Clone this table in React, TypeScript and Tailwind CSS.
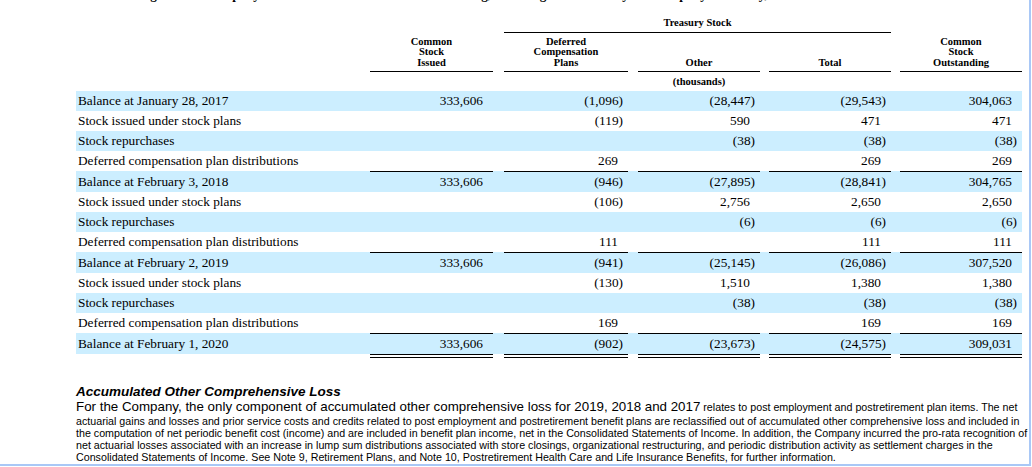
const cols = "grid grid-cols-[294px_123px_11px_124px_10px_122px_9px_122px_9px_122px]";

type Row = {
    label: string
    values: (string | null)[]
    ruled?: boolean
}

const rows: Row[] = [
    { label: "Balance at January 28, 2017", values: ["333,606", "(1,096)", "(28,447)", "(29,543)", "304,063"] },
    { label: "Stock issued under stock plans", values: [null, "(119)", "590", "471", "471"] },
    { label: "Stock repurchases", values: [null, null, "(38)", "(38)", "(38)"] },
    { label: "Deferred compensation plan distributions", values: [null, "269", null, "269", "269"] },
    { label: "Balance at February 3, 2018", values: ["333,606", "(946)", "(27,895)", "(28,841)", "304,765"], ruled: true },
    { label: "Stock issued under stock plans", values: [null, "(106)", "2,756", "2,650", "2,650"] },
    { label: "Stock repurchases", values: [null, null, "(6)", "(6)", "(6)"] },
    { label: "Deferred compensation plan distributions", values: [null, "111", null, "111", "111"] },
    { label: "Balance at February 2, 2019", values: ["333,606", "(941)", "(25,145)", "(26,086)", "307,520"], ruled: true },
    { label: "Stock issued under stock plans", values: [null, "(130)", "1,510", "1,380", "1,380"] },
    { label: "Stock repurchases", values: [null, null, "(38)", "(38)", "(38)"] },
    { label: "Deferred compensation plan distributions", values: [null, "169", null, "169", "169"] },
    { label: "Balance at February 1, 2020", values: ["333,606", "(902)", "(23,673)", "(24,575)", "309,031"], ruled: true },
];

function Amount({ value }: { value: string | null }) {
    if (!value) return null;
    // closing paren hangs past the column like in the filing
    if (value.endsWith(")")) return <span className="mr-[-5px]">{value}</span>;
    return <span>{value}</span>;
}

function TableRow({ row, index }: { row: Row; index: number }) {
    const cell = row.ruled ? "border-t border-black" : "";
    return (
        <div className={`${cols} ${index % 2 === 0 ? "bg-[#cceeff]" : "bg-white"} leading-[20px] text-[13.3px]`}>
            <div className={`pl-[2px] whitespace-nowrap ${row.ruled ? "pt-px" : ""}`}>{row.label}</div>
            {row.values.map((v, i) => (
                <>
                    {i > 0 && <div key={`g${i}`} />}
                    <div key={i} className={`text-right pr-[10px] ${cell}`}>
                        <Amount value={v} />
                    </div>
                </>
            ))}
        </div>
    );
}

export default function App() {
    return (
        <div className="w-[1032px] h-[467px] bg-white overflow-hidden">
            <div className="w-[1031px] h-[466px] border-r-2 border-b-2 border-[#a9c8f6] text-black">
                {/* clipped caption line from the previous page section */}
                <div className="h-[3px] overflow-hidden pl-[120px]">
                    <p className="mt-[-13px] leading-[16px] text-[13px] font-bold whitespace-nowrap" style={{ fontFamily: '"Liberation Serif", serif' }}>
                        Changes in the Company's Common Stock issued and outstanding, including shares held by the Company's treasury, are as follows:
                    </p>
                </div>

                <div className="pl-[76px] w-[1022px]" style={{ fontFamily: '"Liberation Serif", "Times New Roman", serif' }}>
                    {/* Header */}
                    <div className={`${cols} text-[10.5px] leading-[10.5px] font-bold text-center`}>
                        <div className="col-start-4 col-span-5 border-b border-black pt-[15px] pb-[3px]">Treasury Stock</div>
                    </div>
                    <div className={`${cols} text-[10.5px] leading-[10.5px] font-bold text-center items-end`}>
                        <div />
                        <div className="border-b border-black pt-[4px] pb-[3px]">Common<br />Stock<br />Issued</div>
                        <div />
                        <div className="border-b border-black pt-[4px] pb-[3px]">Deferred<br />Compensation<br />Plans</div>
                        <div />
                        <div className="border-b border-black pb-[3px]">Other</div>
                        <div />
                        <div className="border-b border-black pb-[3px]">Total</div>
                        <div />
                        <div className="border-b border-black pt-[4px] pb-[3px]">Common<br />Stock<br />Outstanding</div>
                    </div>
                    <div className={`${cols} text-[10.5px] leading-[19px] font-bold text-center`}>
                        <div className="col-start-6">(thousands)</div>
                    </div>

                    {/* Body */}
                    {rows.map((row, i) => (
                        <TableRow key={i} row={row} index={i} />
                    ))}
                    <div className={cols}>
                        <div />
                        <div className="border-t-4 border-double border-black" />
                        <div />
                        <div className="border-t-4 border-double border-black" />
                        <div />
                        <div className="border-t-4 border-double border-black" />
                        <div />
                        <div className="border-t-4 border-double border-black" />
                        <div />
                        <div className="border-t-4 border-double border-black" />
                    </div>
                </div>

                {/* Accumulated Other Comprehensive Loss note */}
                <div className="pl-[76px] pt-[26px]" style={{ fontFamily: '"Liberation Sans", Arial, sans-serif' }}>
                    <h3 className="text-[13.5px] leading-[15px] font-bold italic">Accumulated Other Comprehensive Loss</h3>
                    <div className="text-[10.7px] leading-[12px] whitespace-nowrap">
                        <p className="leading-[15px]">
                            <span className="text-[13.33px]">For the Company, the only component of accumulated other comprehensive loss for 2019, 2018 and 2017</span> relates to post employment and postretirement plan items. The net
                        </p>
                        <p>actuarial gains and losses and prior service costs and credits related to post employment and postretirement benefit plans are reclassified out of accumulated other comprehensive loss and included in</p>
                        <p>the computation of net periodic benefit cost (income) and are included in benefit plan income, net in the Consolidated Statements of Income. In addition, the Company incurred the pro-rata recognition of</p>
                        <p>net actuarial losses associated with an increase in lump sum distributions associated with store closings, organizational restructuring, and periodic distribution activity as settlement charges in the</p>
                        <p>Consolidated Statements of Income. See Note 9, Retirement Plans, and Note 10, Postretirement Health Care and Life Insurance Benefits, for further information.</p>
                    </div>
                </div>
            </div>
        </div>
    );
}
